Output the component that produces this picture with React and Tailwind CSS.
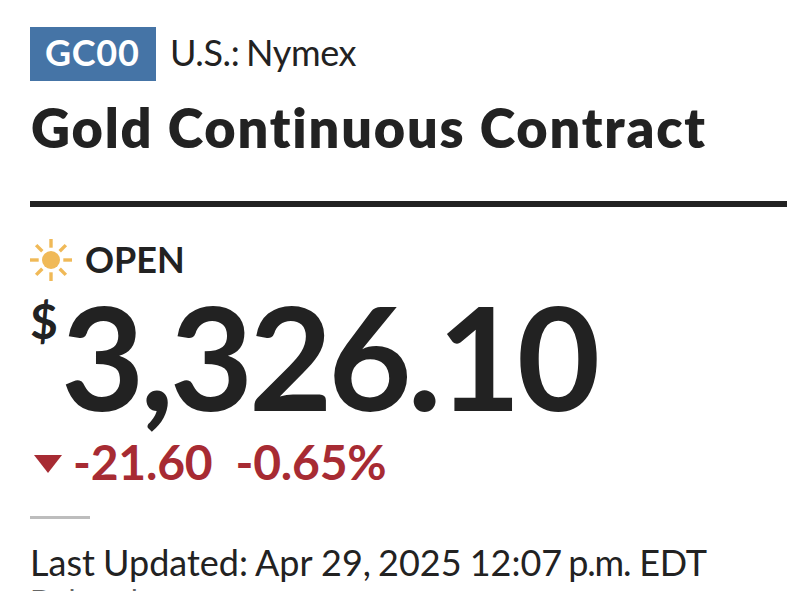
const rays = [0, 45, 90, 135, 180, 225, 270, 315];

function SunIcon() {
  return (
    <svg className="w-[42px] h-[42px]" viewBox="0 0 42 42">
      <circle cx="21" cy="21" r="9" fill="#f0b957" />
      {rays.map((angle) => (
        <path
          key={angle}
          d="M21 0v8.7"
          stroke="#f0b957"
          strokeWidth="3.4"
          transform={`rotate(${angle} 21 21)`}
        />
      ))}
    </svg>
  );
}

export default function App() {
  return (
    <div className="w-[787px] h-[591px] overflow-hidden bg-white pl-[30px] pt-[27px] font-['Lato',sans-serif] text-[#222] whitespace-nowrap">
      <div className="flex items-center h-[54px] text-[36px]">
        <span className="w-[126px] h-[54px] pl-[15px] leading-[51px] bg-[#4574a6] text-white font-bold tracking-[0.7px]">GC00</span>
        <span className="ml-[14px] h-[54px] leading-[51px] tracking-[-0.4px] [word-spacing:-2px]">U.S.: Nymex</span>
      </div>
      <h1 className="mt-[13px] h-[68px] pl-px leading-[67px] text-[54px] font-extrabold tracking-[1.82px] [font-variant-ligatures:none]">Gold Continuous Contract</h1>
      <div className="mt-[39px] h-[6px] bg-[#222]" />
      <div className="mt-[32px] flex items-center h-[42px]">
        <SunIcon />
        <span className="ml-[13px] h-[42px] leading-[40px] text-[36px] font-bold">OPEN</span>
      </div>
      <div className="mt-[1px] flex h-[150px] font-bold">
        <span className="w-[31px] text-[48px] leading-[78px]">$</span>
        <span className="text-[144px] leading-[148px] tracking-[-4.25px]">3,326.10</span>
      </div>
      <div className="mt-[5px] flex items-center h-[54px] text-[48px] leading-[50px] font-bold text-[#a72b33]">
        <svg className="w-[28px] h-[18px] ml-[4px]" viewBox="0 0 28 18">
          <path d="M0 0h28L14 18z" fill="currentColor" />
        </svg>
        <span className="ml-[11px] h-[54px] tracking-[-0.2px]">-21.60</span>
        <span className="ml-[23px] h-[54px] tracking-[-0.2px]">-0.65%</span>
      </div>
      <div className="mt-[25px] w-[60px] h-[3px] bg-[#bdbdbd]" />
      <p className="mt-[22px] flex text-[36px] leading-[42px]">
        <span className="[word-spacing:-1px]">Last Updated:</span>
        <span className="ml-[7px]">Apr 29,</span>
        <span className="ml-[7px] [word-spacing:-1px]">2025 12:07</span>
        <span className="ml-[6px] tracking-[-1.2px]">p.m.</span>
        <span className="ml-[9px] tracking-[-0.3px]">EDT</span>
      </p>
      <p className="text-[30px] leading-[35px] text-[#666]">Delayed quote</p>
    </div>
  );
}
